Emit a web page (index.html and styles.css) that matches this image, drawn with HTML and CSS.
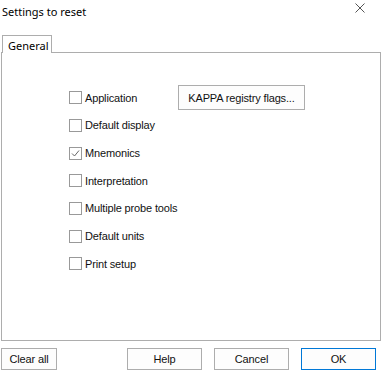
FILE: index.html
```html
<!DOCTYPE html>
<html lang="en">
<head>
    <meta charset="UTF-8">
    <title>Settings to reset</title>
    <link rel="stylesheet" href="styles.css">
</head>
<body>
<div class="dialog">
    <div class="title-bar">
        <span class="title">Settings to reset</span>
        <svg class="close" width="10" height="10" viewBox="0 0 10 10">
            <path d="M0.5 0.5 L9.5 9.5 M9.5 0.5 L0.5 9.5" stroke="#555" stroke-width="1" fill="none"/>
        </svg>
    </div>

    <div class="tabs">
        <div class="tab">General</div>
    </div>

    <div class="panel">
        <div class="options">
            <label class="option"><span class="box"></span>Application</label>
            <label class="option"><span class="box"></span>Default display</label>
            <label class="option"><span class="box checked">
                <svg width="11" height="11" viewBox="0 0 11 11"><path d="M2 5.5 L4.5 8 L9 2.5" stroke="#666" stroke-width="1" fill="none"/></svg>
            </span>Mnemonics</label>
            <label class="option"><span class="box"></span>Interpretation</label>
            <label class="option"><span class="box"></span>Multiple probe tools</label>
            <label class="option"><span class="box"></span>Default units</label>
            <label class="option"><span class="box"></span>Print setup</label>
        </div>
        <button class="btn registry-btn">KAPPA registry flags...</button>
    </div>

    <div class="footer">
        <button class="btn clear-btn">Clear all</button>
        <div class="footer-right">
            <button class="btn">Help</button>
            <button class="btn">Cancel</button>
            <button class="btn default">OK</button>
        </div>
    </div>
</div>
</body>
</html>
```

FILE: styles.css
```css
* {
    box-sizing: border-box;
}
body {
    margin: 0;
    background-color: #fff;
    color: #000;
    font-family: "Liberation Sans", Arial, sans-serif;
    font-size: 11px;
}
.dialog {
    width: 388px;
    height: 373px;
    padding: 0 7px 0 1px;
    display: flex;
    flex-direction: column;
}
.title-bar {
    height: 34px;
    display: flex;
    justify-content: space-between;
    align-items: flex-start;
}
.title {
    font-family: "Noto Sans", sans-serif;
    font-size: 11px;
    margin: 4px 0 0 1px;
}
.close {
    margin: 3px 16px 0 0;
}
.tabs {
    display: flex;
    height: 18px;
    padding-left: 1px;
}
.tab {
    width: 50px;
    border: 1px solid #adadad;
    border-bottom: none;
    background: #fff;
    font-family: "Noto Sans", sans-serif;
    font-size: 11px;
    padding: 2px 0 0 5px;
    position: relative;
    top: 1px;
}
.panel {
    height: 289px;
    border: 1px solid #adadad;
    display: flex;
    align-items: flex-start;
    padding: 31px 0 0 67px;
}
.options {
    width: 109px;
    display: flex;
    flex-direction: column;
}
.option {
    height: 27.67px;
    display: flex;
    align-items: center;
    white-space: nowrap;
    letter-spacing: -0.15px;
    color: #111;
}
.box {
    width: 13px;
    height: 13px;
    border: 1px solid #999;
    margin-right: 3px;
    display: flex;
    align-items: center;
    justify-content: center;
    background: #fff;
}
.btn {
    font-family: "Liberation Sans", Arial, sans-serif;
    font-size: 11px;
    letter-spacing: -0.15px;
    color: #111;
    background: #fdfdfd;
    border: 1px solid #adadad;
    height: 22px;
    width: 75px;
    padding: 0;
}
.registry-btn {
    width: 127px;
    height: 25px;
    margin-top: 1px;
}
.footer {
    display: flex;
    justify-content: space-between;
    margin-top: 7px;
}
.clear-btn {
    width: 56px;
}
.footer-right {
    display: flex;
    gap: 12px;
    margin-right: 5px;
}
.btn.default {
    border-color: #0078d7;
}
```
